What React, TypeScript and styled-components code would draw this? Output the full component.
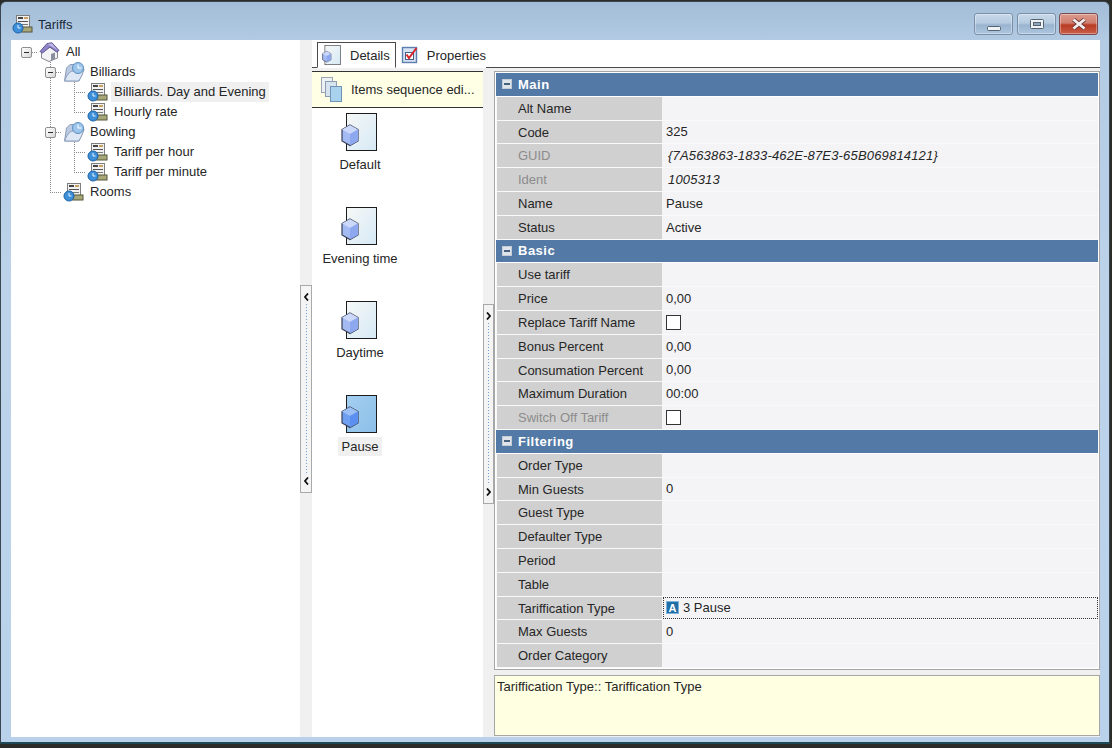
import styled, { createGlobalStyle } from 'styled-components';

const GlobalStyle = createGlobalStyle`
  html, body {
    margin: 0;
    padding: 0;
    background: #2b2b28;
    overflow: hidden;
  }
  * { box-sizing: border-box; }
`;

const Page = styled.div`
  width: 1112px;
  height: 748px;
  padding-top: 1px;
  font-family: "Liberation Sans", Arial, sans-serif;
  font-size: 13px;
  color: #262626;
`;

const Window = styled.div`
  width: 1110px;
  height: 743px;
  display: flex;
  flex-direction: column;
  background: linear-gradient(to bottom, #a3bdd8 0, #b3cbe3 40px, #bcd3ea 300px, #b9d1ea 100%);
  border: 1px solid #3a4650;
  border-bottom: 2px solid #1f4a55;
  border-radius: 6px 6px 0 0;
`;

const TitleBar = styled.div`
  height: 38px;
  flex: none;
  display: flex;
  align-items: center;
  padding: 6px 11px 0 11px;
`;

const TitleText = styled.span`
  margin-left: 5px;
  font-size: 13px;
  color: #1a2a38;
  flex: 1;
`;

const WindowButton = styled.div<{ $close?: boolean }>`
  width: 39px;
  height: 22px;
  margin-left: ${p => (p.$close ? 3 : 4)}px;
  display: flex;
  align-items: center;
  justify-content: center;
  border: 1px solid ${p => (p.$close ? '#7d4a50' : '#7a90a8')};
  border-radius: 3px;
  box-shadow: inset 0 0 0 1px rgba(255, 255, 255, 0.35);
  background: ${p =>
    p.$close
      ? 'linear-gradient(to bottom, #dc9a8c 0, #cf7f70 45%, #b83a22 55%, #c9604a 100%)'
      : 'linear-gradient(to bottom, #c8d9ea 0, #b6cbe0 45%, #9ab4d0 55%, #aec6de 100%)'};
`;

const MinGlyph = styled.svg`
  margin-top: 8px;
`;

const Client = styled.div`
  flex: 1;
  min-height: 0;
  display: flex;
  margin: 0 9px 5px 10px;
`;

const TreePanel = styled.div`
  width: 289px;
  flex: none;
  background: #fff;
  padding: 2px 0 0 3px;
`;

const TreeRow = styled.div`
  height: 20px;
  display: flex;
  align-items: center;
`;

const guideColor = '#8a8a8a';
const dotsV = `repeating-linear-gradient(to bottom, ${guideColor} 0 1px, transparent 1px 2px)`;
const dotsH = `repeating-linear-gradient(to right, ${guideColor} 0 1px, transparent 1px 2px)`;

type GuideKind = 'blank' | 'pipe' | 'tee' | 'elbow' | 'root';

const guideBackground: Record<GuideKind, string> = {
  blank: 'none',
  pipe: `background-image: ${dotsV}; background-size: 1px 100%; background-position: 12px 0; background-repeat: no-repeat;`,
  tee: `background-image: ${dotsV}, ${dotsH}; background-size: 1px 100%, 12px 1px; background-position: 12px 0, 12px 10px; background-repeat: no-repeat;`,
  elbow: `background-image: ${dotsV}, ${dotsH}; background-size: 1px 10px, 12px 1px; background-position: 12px 0, 12px 10px; background-repeat: no-repeat;`,
  root: `background-image: ${dotsH}; background-size: 12px 1px; background-position: 12px 10px; background-repeat: no-repeat;`,
};

const Guide = styled.span<{ $kind: GuideKind }>`
  width: 24px;
  height: 20px;
  flex: none;
  display: flex;
  align-items: center;
  justify-content: center;
  ${p => (p.$kind === 'blank' ? '' : guideBackground[p.$kind])}
`;

const Expander = styled.span`
  width: 11px;
  height: 11px;
  border: 1px solid #8e8f8f;
  border-radius: 2px;
  background: linear-gradient(135deg, #fff 0, #d8d8d8 100%);
  display: flex;
  align-items: center;
  justify-content: center;
  &::after {
    content: '';
    width: 5px;
    height: 1px;
    background: #2a2a2a;
  }
`;

const TreeIconSlot = styled.span`
  width: 22px;
  flex: none;
  display: flex;
  margin-left: 1px;
`;

const TreeLabel = styled.span<{ $selected?: boolean }>`
  height: 20px;
  line-height: 20px;
  margin-left: 2px;
  padding: 0 3px;
  background: ${p => (p.$selected ? '#f0f0f0' : 'transparent')};
  white-space: nowrap;
`;

const Splitter = styled.div<{ $w: number }>`
  width: ${p => p.$w}px;
  flex: none;
  background: #f0f0f0;
  display: flex;
  align-items: center;
  justify-content: center;
`;

const Grip = styled.div<{ $h: number }>`
  width: 100%;
  height: ${p => p.$h}px;
  display: flex;
  flex-direction: column;
  align-items: center;
  justify-content: space-between;
  padding: 7px 0;
  border: 1px solid #a9a9a9;
  background-color: #f4f4f4;
  background-image: repeating-linear-gradient(to bottom, #6f9ed0 0 1px, transparent 1px 3px);
  background-size: 1px calc(100% - 36px);
  background-position: center;
  background-repeat: no-repeat;
`;

const Chevron = styled.span`
  font-size: 0;
  line-height: 0;
  display: block;
`;

const RightPane = styled.div`
  flex: 1;
  min-width: 0;
  display: flex;
  flex-direction: column;
  background: #f0f0f0;
`;

const TabStrip = styled.div`
  height: 28px;
  flex: none;
  background: #fff;
  border-bottom: 1px solid #4a4a4a;
  display: flex;
  align-items: flex-end;
  padding-left: 5px;
`;

const Tab = styled.div<{ $active?: boolean }>`
  height: 26px;
  margin-bottom: -1px;
  display: flex;
  align-items: center;
  gap: ${p => (p.$active ? 9 : 8)}px;
  padding: ${p => (p.$active ? '0 5px 0 4px' : '0 0 0 5px')};
  white-space: nowrap;
  background: #fff;
  ${p => (p.$active ? 'border: 1px solid #4a4a4a; border-bottom-color: #fff;' : '')}
`;

const PaneBody = styled.div`
  flex: 1;
  min-height: 0;
  display: flex;
  padding-top: 3px;
`;

const ListPanel = styled.div`
  width: 171px;
  flex: none;
  background: #fff;
`;

const ListHeader = styled.div`
  height: 37px;
  background: #ffffe6;
  border-top: 1px solid #333;
  border-bottom: 1px solid #333;
  display: flex;
  align-items: center;
  gap: 8px;
  padding-left: 8px;
  white-space: nowrap;
`;

const SequenceList = styled.div`
  display: flex;
  flex-direction: column;
  padding-top: 5px;
`;

const SequenceItem = styled.div`
  width: 96px;
  height: 94px;
  display: flex;
  flex-direction: column;
  align-items: center;
  svg {
    margin-right: 3px;
  }
`;

const SequenceLabel = styled.span<{ $selected?: boolean }>`
  margin-top: 4px;
  height: 19px;
  line-height: 19px;
  padding: 0 4px;
  background: ${p => (p.$selected ? '#f0f0f0' : 'transparent')};
`;

const GridColumn = styled.div`
  flex: 1;
  min-width: 0;
  display: flex;
  flex-direction: column;
`;

const GridFrame = styled.div`
  height: 599px;
  flex: none;
  background: #fff;
  border: 1px solid #a6a6a6;
  padding: 1px 1px 0 1px;
`;

const SectionHeader = styled.div`
  height: 22.8px;
  margin-bottom: 1px;
  background: #537aa6;
  color: #fff;
  font-weight: 700;
  font-size: 13px;
  letter-spacing: 0.5px;
  display: flex;
  align-items: center;
  padding-left: 6px;
  gap: 6px;
`;

const SectionToggle = styled.span`
  width: 10px;
  height: 10px;
  background: #dfe4ea;
  border: 1px solid #c4ccd6;
  display: flex;
  align-items: center;
  justify-content: center;
  &::after {
    content: '';
    width: 6px;
    height: 2px;
    background: #46627f;
  }
`;

const PropRow = styled.div`
  height: 23.8px;
  display: grid;
  grid-template-columns: 165px 1fr;
  padding-left: 1px;
  background: #f9f9fa;
`;

const PropName = styled.div<{ $disabled?: boolean }>`
  height: 22.8px;
  line-height: 23px;
  background: #d0d0d0;
  padding-left: 21px;
  color: ${p => (p.$disabled ? '#8c8c8c' : '#262626')};
  white-space: nowrap;
`;

const PropValue = styled.div<{ $focused?: boolean; $readonly?: boolean }>`
  height: 22.8px;
  background: #f4f4f6;
  padding-left: 4px;
  white-space: nowrap;
  display: flex;
  align-items: center;
  ${p => (p.$readonly ? 'font-style: italic; padding-left: 6px; letter-spacing: 0.18px;' : '')}
  ${p => (p.$focused ? 'outline: 1px dotted #333; outline-offset: -1px; margin-left: 1px; padding-left: 3px;' : '')}
`;

const CheckBox = styled.span`
  width: 15px;
  height: 15px;
  background: #fff;
  border: 1px solid #333;
`;

const TypeBadge = styled.span`
  width: 13px;
  height: 13px;
  margin-right: 4px;
  background: #1f6ea8;
  color: #fff;
  font-size: 11px;
  font-weight: 700;
  line-height: 12px;
  text-align: center;
  border: 1px solid #7fb2d8;
`;

const Description = styled.div`
  height: 61px;
  margin-top: 5px;
  background: #ffffe1;
  border: 1px solid #a6a6a6;
  padding: 3px 2px;
  line-height: 15px;
`;

function TariffIcon() {
  return (
    <svg width="21" height="20" viewBox="0 0 21 20">
      <rect x="4.5" y="1.5" width="13" height="12" fill="#f1f1f1" stroke="#7d7d7d" />
      <rect x="6" y="3" width="5" height="2" fill="#454545" />
      <rect x="12" y="3" width="4" height="2" fill="#c9a06a" />
      <rect x="6" y="7" width="10" height="1" fill="#555" />
      <rect x="6" y="10" width="10" height="1" fill="#777" />
      <rect x="9" y="13" width="11" height="5" fill="#a7a777" stroke="#55553a" />
      <circle cx="6" cy="14" r="5" fill="#3d8fd8" stroke="#1d62a6" />
      <path d="M6 11v3h2.5" fill="none" stroke="#e8f4ff" strokeWidth="1" />
    </svg>
  );
}

function FolderIcon() {
  return (
    <svg width="22" height="20" viewBox="0 0 22 20">
      <path d="M1.5 19 L3.5 6 L7 2.5 L14 2.5 L14 7 L21 7 L16 19 Z" fill="#bccbe4" stroke="#8a9cb8" />
      <path d="M1.5 19 C4 13 6 9.5 10 9 L21 7.5 C19.5 12 18 16 15.5 19 Z" fill="#dde7f5" stroke="#8a9cb8" />
      <circle cx="15" cy="6" r="5.5" fill="#9cc6ec" stroke="#5d8fbd" />
      <path d="M15 2.5v3.5h3.5" fill="none" stroke="#fff" />
    </svg>
  );
}

function HomeIcon() {
  return (
    <svg width="21" height="20" viewBox="0 0 21 20">
      <path d="M2.5 9 L2.5 16 L10 19.5 L18.5 16 L18.5 9 L10 5 Z" fill="#f4f4f6" stroke="#85858f" />
      <path d="M1 9.5 L8 1.5 L13 0.8 L20 8.5 L17.5 10 L11 5 L3.5 11 Z" fill="#8f84c8" stroke="#5f5690" />
      <path d="M8.5 2 L13 1.5 L18.5 8 L11 3.5 Z" fill="#c0b8e8" />
      <path d="M12 12 L16 10.5 L16 17 L12 18.5 Z" fill="#8a8f9e" />
    </svg>
  );
}

function CubePage({ selected, small }: { selected?: boolean; small?: boolean }) {
  const id = selected ? 'pageSel' : small ? 'pageSmall' : 'pagePlain';
  const w = small ? 19 : 36;
  const h = small ? 20 : 38;
  return (
    <svg width={w} height={h} viewBox="0 0 36 38">
      <defs>
        <linearGradient id={id} x1="0" y1="0" x2="1" y2="1">
          <stop offset="0" stopColor={selected ? '#a4cff0' : '#f6f8f6'} />
          <stop offset="1" stopColor={selected ? '#8cbfe8' : '#d6e9f6'} />
        </linearGradient>
      </defs>
      <rect x="5.5" y="0.5" width="30" height="37" fill={`url(#${id})`} stroke="#1c1c1c" />
      <path d="M9 12 L17 16.5 L17 28 L9 32.5 L1 28 L1 16.5 Z" fill={selected ? '#6f9ff0' : '#a4baf2'} stroke="#3a3f55" strokeWidth="1.2" />
      <path d="M9 12 L17 16.5 L9 21 L1 16.5 Z" fill={selected ? '#9cc0f6' : '#cbd8fa'} />
      <path d="M9 21 L17 16.5 L17 28 L9 32.5 Z" fill={selected ? '#5b8ff0' : '#8ea8f0'} />
    </svg>
  );
}

function PropertiesIcon() {
  return (
    <svg width="18" height="20" viewBox="0 0 18 20">
      <rect x="1.5" y="2.5" width="14" height="15" fill="#d5e2f4" stroke="#5c7fb0" strokeWidth="1.4" />
      <rect x="4.5" y="7.5" width="8" height="7" fill="#fff" stroke="#4a5f86" />
      <path d="M5.5 9.5 L8 13 L15.5 3" fill="none" stroke="#d8242a" strokeWidth="2" />
    </svg>
  );
}

function StackIcon() {
  return (
    <svg width="23" height="27" viewBox="0 0 23 27">
      <rect x="1.5" y="1.5" width="11" height="15" fill="#eef1f4" stroke="#9aa6b2" />
      <rect x="5.5" y="5.5" width="11" height="15" fill="#d6e4f0" stroke="#8a9cb0" />
      <rect x="10.5" y="10.5" width="11" height="15" fill="#a9d2ee" stroke="#6f94b6" />
    </svg>
  );
}

function ArrowGlyph({ dir }: { dir: 'left' | 'right' }) {
  return (
    <Chevron>
      <svg width="5" height="8" viewBox="0 0 5 8">
        <path d={dir === 'left' ? 'M4 0.5 L1 4 L4 7.5' : 'M1 0.5 L4 4 L1 7.5'} fill="none" stroke="#111" strokeWidth="1.8" />
      </svg>
    </Chevron>
  );
}

type TreeNode = { label: string; guides: GuideKind[]; box?: boolean; icon: 'home' | 'folder' | 'tariff'; selected?: boolean };

const treeNodes: TreeNode[] = [
  { label: 'All', guides: ['root'], box: true, icon: 'home' },
  { label: 'Billiards', guides: ['blank', 'tee'], box: true, icon: 'folder' },
  { label: 'Billiards. Day and Evening', guides: ['blank', 'pipe', 'tee'], icon: 'tariff', selected: true },
  { label: 'Hourly rate', guides: ['blank', 'pipe', 'elbow'], icon: 'tariff' },
  { label: 'Bowling', guides: ['blank', 'tee'], box: true, icon: 'folder' },
  { label: 'Tariff per hour', guides: ['blank', 'pipe', 'tee'], icon: 'tariff' },
  { label: 'Tariff per minute', guides: ['blank', 'pipe', 'elbow'], icon: 'tariff' },
  { label: 'Rooms', guides: ['blank', 'elbow'], icon: 'tariff' },
];

const sequence = ['Default', 'Evening time', 'Daytime', 'Pause'];

type Prop = { name: string; value?: string; disabled?: boolean; readonly?: boolean; check?: boolean; focused?: boolean };
type Section = { title: string; props: Prop[] };

const sections: Section[] = [
  {
    title: 'Main',
    props: [
      { name: 'Alt Name' },
      { name: 'Code', value: '325' },
      { name: 'GUID', value: '{7A563863-1833-462E-87E3-65B069814121}', disabled: true, readonly: true },
      { name: 'Ident', value: '1005313', disabled: true, readonly: true },
      { name: 'Name', value: 'Pause' },
      { name: 'Status', value: 'Active' },
    ],
  },
  {
    title: 'Basic',
    props: [
      { name: 'Use tariff' },
      { name: 'Price', value: '0,00' },
      { name: 'Replace Tariff Name', check: true },
      { name: 'Bonus Percent', value: '0,00' },
      { name: 'Consumation Percent', value: '0,00' },
      { name: 'Maximum Duration', value: '00:00' },
      { name: 'Switch Off Tariff', check: true, disabled: true },
    ],
  },
  {
    title: 'Filtering',
    props: [
      { name: 'Order Type' },
      { name: 'Min Guests', value: '0' },
      { name: 'Guest Type' },
      { name: 'Defaulter Type' },
      { name: 'Period' },
      { name: 'Table' },
      { name: 'Tariffication Type', value: '3 Pause', focused: true },
      { name: 'Max Guests', value: '0' },
      { name: 'Order Category' },
    ],
  },
];

export default function App() {
  return (
    <Page>
      <GlobalStyle />
      <Window>
        <TitleBar>
          <TariffIcon />
          <TitleText>Tariffs</TitleText>
          <WindowButton>
            <MinGlyph width="14" height="5" viewBox="0 0 14 5">
              <rect x="0.5" y="0.5" width="13" height="4" rx="1" fill="#eef2f6" stroke="#55626f" />
            </MinGlyph>
          </WindowButton>
          <WindowButton>
            <svg width="14" height="10" viewBox="0 0 14 10">
              <rect x="0.5" y="0.5" width="13" height="9" rx="1" fill="#eef2f6" stroke="#55626f" />
              <rect x="3.5" y="3.5" width="7" height="3" fill="#8fa6bf" stroke="#55626f" />
            </svg>
          </WindowButton>
          <WindowButton $close>
            <svg width="16" height="12" viewBox="0 0 16 12">
              <path d="M2.5 1.5 L13.5 10.5 M13.5 1.5 L2.5 10.5" stroke="#6b3a3a" strokeWidth="4.4" />
              <path d="M2.5 1.5 L13.5 10.5 M13.5 1.5 L2.5 10.5" stroke="#f4eeee" strokeWidth="2.8" />
            </svg>
          </WindowButton>
        </TitleBar>
        <Client>
          <TreePanel>
            {treeNodes.map(node => (
              <TreeRow key={node.label}>
                {node.guides.map((kind, i) => (
                  <Guide key={i} $kind={kind}>
                    {node.box && i === node.guides.length - 1 && <Expander />}
                  </Guide>
                ))}
                <TreeIconSlot>
                  {node.icon === 'home' && <HomeIcon />}
                  {node.icon === 'folder' && <FolderIcon />}
                  {node.icon === 'tariff' && <TariffIcon />}
                </TreeIconSlot>
                <TreeLabel $selected={node.selected}>{node.label}</TreeLabel>
              </TreeRow>
            ))}
          </TreePanel>
          <Splitter $w={12}>
            <Grip $h={208}>
              <ArrowGlyph dir="left" />
              <ArrowGlyph dir="left" />
            </Grip>
          </Splitter>
          <RightPane>
            <TabStrip>
              <Tab $active>
                <CubePage small />
                Details
              </Tab>
              <Tab>
                <PropertiesIcon />
                Properties
              </Tab>
            </TabStrip>
            <PaneBody>
              <ListPanel>
                <ListHeader>
                  <StackIcon />
                  Items sequence edi...
                </ListHeader>
                <SequenceList>
                  {sequence.map(label => (
                    <SequenceItem key={label}>
                      <CubePage selected={label === 'Pause'} />
                      <SequenceLabel $selected={label === 'Pause'}>{label}</SequenceLabel>
                    </SequenceItem>
                  ))}
                </SequenceList>
              </ListPanel>
              <Splitter $w={11}>
                <Grip $h={200}>
                  <ArrowGlyph dir="right" />
                  <ArrowGlyph dir="right" />
                </Grip>
              </Splitter>
              <GridColumn>
                <GridFrame>
                  {sections.map(section => (
                    <div key={section.title}>
                      <SectionHeader>
                        <SectionToggle />
                        {section.title}
                      </SectionHeader>
                      {section.props.map(prop => (
                        <PropRow key={prop.name}>
                          <PropName $disabled={prop.disabled}>{prop.name}</PropName>
                          <PropValue $focused={prop.focused} $readonly={prop.readonly}>
                            {prop.check && <CheckBox />}
                            {prop.focused && <TypeBadge>A</TypeBadge>}
                            {prop.value}
                          </PropValue>
                        </PropRow>
                      ))}
                    </div>
                  ))}
                </GridFrame>
                <Description>Tariffication Type:: Tariffication Type</Description>
              </GridColumn>
            </PaneBody>
          </RightPane>
        </Client>
      </Window>
    </Page>
  );
}
